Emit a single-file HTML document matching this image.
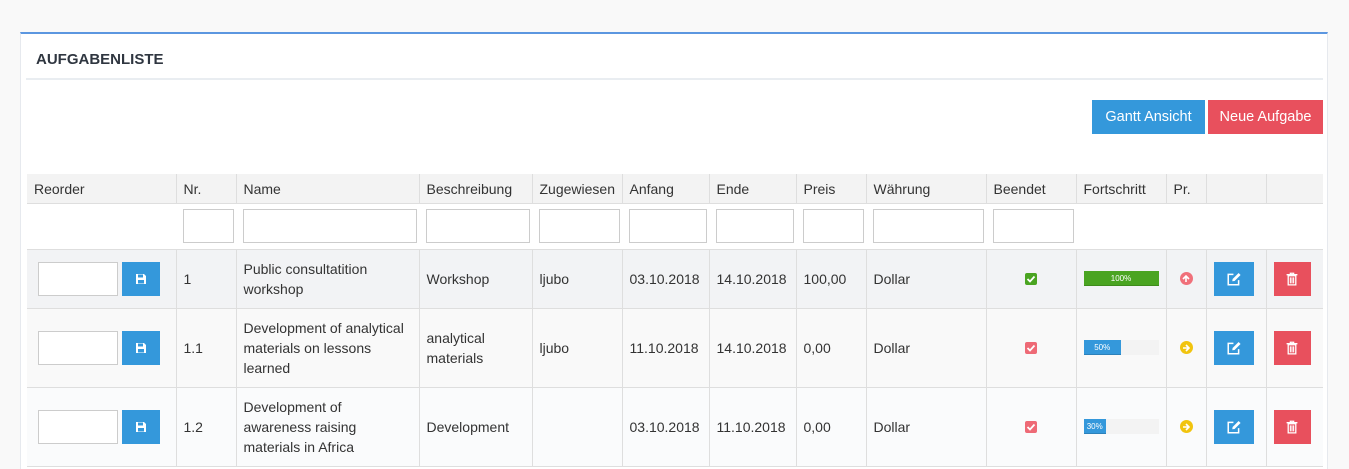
<!DOCTYPE html>
<html><head><meta charset="utf-8"><style>
*{box-sizing:border-box;margin:0;padding:0}
html,body{width:1349px;height:469px;overflow:hidden}
body{background:#f9f9f9;font-family:"Liberation Sans",sans-serif;font-size:14px;color:#333;position:relative}
.card{position:absolute;left:20px;top:32px;width:1308px;height:437px;background:#fff;border-top:2px solid #5c97e0;border-left:1px solid #e6e9ee;border-right:1px solid #e6e9ee}
.title{position:absolute;left:36px;top:51px;font-weight:bold;font-size:15px;color:#2f3640}
.sep{position:absolute;left:26px;top:78px;width:1297px;height:2px;background:#e9edf1}
.btn{position:absolute;top:100px;height:34px;color:#fff;font-size:14.5px;line-height:34px;text-align:center}
table{position:absolute;left:27px;top:174px;width:1296px;border-collapse:collapse;table-layout:fixed}
td,th{border:1px solid #dedede;padding:0 7px;vertical-align:middle;font-weight:normal;text-align:left;line-height:20px}
tr:first-child td,tr:first-child th{border-top:none}
td:first-child,th:first-child{border-left:none}
td:last-child,th:last-child{border-right:none}
thead tr.h{height:29px;background:#f3f3f3}
thead th{padding-top:1px}
tr.f{height:46px;background:#fff}
tr.f td{border-left:none;border-right:none;padding:0 2px 0 7px}
.in{height:34px;border:1px solid #ccc;background:#fff;width:100%}
tr.r1{height:59px;background:#f2f3f5}
tr.r2{height:79px;background:#f9f9f9}
tr.r3{height:79px;background:#fafbfc}
.ri{display:inline-block;width:80px;height:34px;border:1px solid #ccc;background:#fff;vertical-align:middle;margin-left:4px}
.sb{display:inline-block;width:38px;height:34px;background:#3498db;vertical-align:middle;margin-left:4px;position:relative}
.eb{display:block;width:40px;height:34px;background:#3498db;margin-left:0;position:relative}
.db{display:block;width:37px;height:34px;background:#e8505d;position:relative}
.ic{position:absolute;left:50%;top:50%;transform:translate(-50%,-50%)}
.chk{display:block;width:12px;height:12px;border-radius:2px;margin:0 auto;position:relative}
.pb{width:75px;height:15px;background:#f3f3f3;position:relative}
.pf{height:15px;color:#fff;font-size:8px;line-height:15px;text-align:center;border-bottom:1px solid rgba(0,0,0,.15)}
.ar{display:block;width:13px;height:13px;border-radius:7px;margin:0 auto;position:relative}
</style></head><body>
<div class="card"></div>
<div class="title">AUFGABENLISTE</div>
<div class="sep"></div>
<div class="btn" style="left:1092px;width:113px;background:#3498db">Gantt Ansicht</div>
<div class="btn" style="left:1208px;width:115px;background:#e8505d">Neue Aufgabe</div>
<table>
<colgroup><col style="width:149px"><col style="width:60px"><col style="width:183px"><col style="width:113px"><col style="width:90px"><col style="width:87px"><col style="width:87px"><col style="width:70px"><col style="width:120px"><col style="width:90px"><col style="width:90px"><col style="width:40px"><col style="width:60px"><col style="width:57px"></colgroup>
<thead><tr class="h"><th>Reorder</th><th>Nr.</th><th>Name</th><th>Beschreibung</th><th>Zugewiesen</th><th>Anfang</th><th>Ende</th><th>Preis</th><th>Währung</th><th>Beendet</th><th>Fortschritt</th><th>Pr.</th><th></th><th></th></tr></thead>
<tbody>
<tr class="f"><td></td><td><div class="in"></div></td><td><div class="in"></div></td><td><div class="in"></div></td><td><div class="in"></div></td><td><div class="in"></div></td><td><div class="in"></div></td><td><div class="in"></div></td><td><div class="in"></div></td><td><div class="in"></div></td><td></td><td></td><td></td><td></td></tr>
<tr class="r1"><td><span class="ri"></span><span class="sb"><svg class="ic" width="12" height="12" viewBox="0 0 12 12"><path d="M1 1h8l2 2v8H1z" fill="#fff"/><rect x="3" y="1.5" width="5" height="3" fill="#3498db"/><rect x="3" y="7" width="6" height="3.5" fill="#3498db"/></svg></span></td><td>1</td><td>Public consultatition workshop</td><td>Workshop</td><td>ljubo</td><td>03.10.2018</td><td>14.10.2018</td><td>100,00</td><td>Dollar</td>
<td><span class="chk" style="background:#4aa421"><svg class="ic" width="9" height="8" viewBox="0 0 9 8"><path d="M1 4l2.5 2.5L8 1.5" stroke="#fff" stroke-width="1.8" fill="none"/></svg></span></td>
<td><div class="pb"><div class="pf" style="width:100%;background:#4aa421">100%</div></div></td>
<td><span class="ar" style="background:#f0707a"><svg class="ic" width="8" height="8" viewBox="0 0 8 8"><path d="M4 7V1M1 4l3-3 3 3" stroke="#fff" stroke-width="1.6" fill="none"/></svg></span></td>
<td><span class="eb"><svg class="ic" width="15" height="14" viewBox="0 0 13 12"><path d="M6 2H1.5v9h9V7" stroke="#fff" stroke-width="1.3" fill="none"/><path d="M10.5 .8l1.7 1.7L7 7.7 5 8l.3-2z" fill="#fff"/></svg></span></td>
<td><span class="db"><svg class="ic" width="11" height="13" viewBox="0 0 10 12"><path d="M0 2h10M3.5 2V.7h3V2M1.5 3h7v8.5h-7z" stroke="#fff" stroke-width="1.2" fill="none"/><path d="M3.5 4.5v5.5M5 4.5v5.5M6.5 4.5v5.5" stroke="#fff" stroke-width="1"/></svg></span></td></tr>
<tr class="r2"><td><span class="ri"></span><span class="sb"><svg class="ic" width="12" height="12" viewBox="0 0 12 12"><path d="M1 1h8l2 2v8H1z" fill="#fff"/><rect x="3" y="1.5" width="5" height="3" fill="#3498db"/><rect x="3" y="7" width="6" height="3.5" fill="#3498db"/></svg></span></td><td>1.1</td><td>Development of analytical materials on lessons learned</td><td>analytical materials</td><td>ljubo</td><td>11.10.2018</td><td>14.10.2018</td><td>0,00</td><td>Dollar</td>
<td><span class="chk" style="background:#ee6a76"><svg class="ic" width="9" height="8" viewBox="0 0 9 8"><path d="M1 4l2.5 2.5L8 1.5" stroke="#fff" stroke-width="1.8" fill="none"/></svg></span></td>
<td><div class="pb"><div class="pf" style="width:50%;background:#3498db">50%</div></div></td>
<td><span class="ar" style="background:#f1c40f"><svg class="ic" width="8" height="8" viewBox="0 0 8 8"><path d="M1 4h6M4 1l3 3-3 3" stroke="#fff" stroke-width="1.6" fill="none"/></svg></span></td>
<td><span class="eb"><svg class="ic" width="15" height="14" viewBox="0 0 13 12"><path d="M6 2H1.5v9h9V7" stroke="#fff" stroke-width="1.3" fill="none"/><path d="M10.5 .8l1.7 1.7L7 7.7 5 8l.3-2z" fill="#fff"/></svg></span></td>
<td><span class="db"><svg class="ic" width="11" height="13" viewBox="0 0 10 12"><path d="M0 2h10M3.5 2V.7h3V2M1.5 3h7v8.5h-7z" stroke="#fff" stroke-width="1.2" fill="none"/><path d="M3.5 4.5v5.5M5 4.5v5.5M6.5 4.5v5.5" stroke="#fff" stroke-width="1"/></svg></span></td></tr>
<tr class="r3"><td><span class="ri"></span><span class="sb"><svg class="ic" width="12" height="12" viewBox="0 0 12 12"><path d="M1 1h8l2 2v8H1z" fill="#fff"/><rect x="3" y="1.5" width="5" height="3" fill="#3498db"/><rect x="3" y="7" width="6" height="3.5" fill="#3498db"/></svg></span></td><td>1.2</td><td>Development of awareness raising materials in Africa</td><td>Development</td><td></td><td>03.10.2018</td><td>11.10.2018</td><td>0,00</td><td>Dollar</td>
<td><span class="chk" style="background:#ee6a76"><svg class="ic" width="9" height="8" viewBox="0 0 9 8"><path d="M1 4l2.5 2.5L8 1.5" stroke="#fff" stroke-width="1.8" fill="none"/></svg></span></td>
<td><div class="pb"><div class="pf" style="width:30%;background:#3498db">30%</div></div></td>
<td><span class="ar" style="background:#f1c40f"><svg class="ic" width="8" height="8" viewBox="0 0 8 8"><path d="M1 4h6M4 1l3 3-3 3" stroke="#fff" stroke-width="1.6" fill="none"/></svg></span></td>
<td><span class="eb"><svg class="ic" width="15" height="14" viewBox="0 0 13 12"><path d="M6 2H1.5v9h9V7" stroke="#fff" stroke-width="1.3" fill="none"/><path d="M10.5 .8l1.7 1.7L7 7.7 5 8l.3-2z" fill="#fff"/></svg></span></td>
<td><span class="db"><svg class="ic" width="11" height="13" viewBox="0 0 10 12"><path d="M0 2h10M3.5 2V.7h3V2M1.5 3h7v8.5h-7z" stroke="#fff" stroke-width="1.2" fill="none"/><path d="M3.5 4.5v5.5M5 4.5v5.5M6.5 4.5v5.5" stroke="#fff" stroke-width="1"/></svg></span></td></tr>
</tbody></table>
</body></html>
